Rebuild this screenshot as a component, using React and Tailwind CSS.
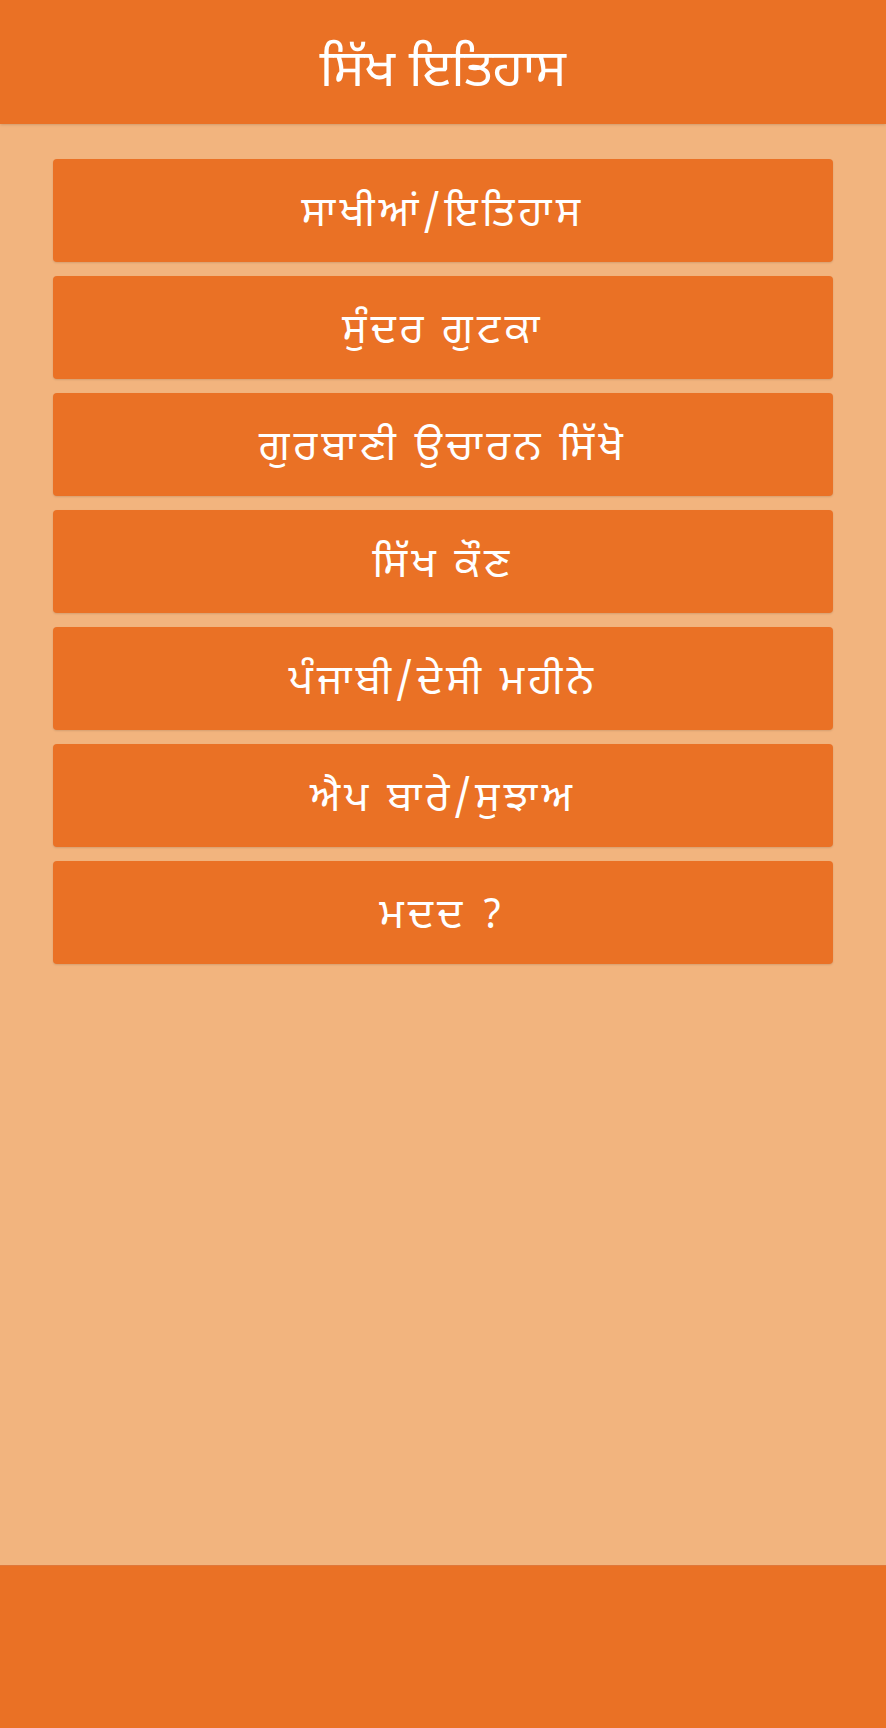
import React from "react";

const menuItems = [
  "ਸਾਖੀਆਂ/ਇਤਿਹਾਸ",
  "ਸੁੰਦਰ ਗੁਟਕਾ",
  "ਗੁਰਬਾਣੀ ਉਚਾਰਨ ਸਿੱਖੋ",
  "ਸਿੱਖ ਕੌਣ",
  "ਪੰਜਾਬੀ/ਦੇਸੀ ਮਹੀਨੇ",
  "ਐਪ ਬਾਰੇ/ਸੁਝਾਅ",
  "ਮਦਦ ?",
];

const App = () => {
  return (
    <div
      className="flex h-[1728px] w-full flex-col bg-[#f2b47e] text-white"
      style={{ fontFamily: '"Noto Sans Gurmukhi", "Noto Sans", "Liberation Sans", sans-serif' }}
    >
      {/* Header */}
      <div className="flex h-[124px] items-center justify-center bg-[#ea7125] pt-[22px] shadow-sm">
        <h1 className="text-[52px] leading-none">ਸਿੱਖ ਇਤਿਹਾਸ</h1>
      </div>

      {/* Menu */}
      <div className="flex flex-1 flex-col gap-[14px] px-[53px] pt-[35px]">
        {menuItems.map((item) => (
          <button
            key={item}
            className="flex h-[103px] w-full items-center justify-center rounded-[4px] bg-[#ea7125] pt-[12px] text-[41px] leading-none tracking-[4px] shadow-[0_1px_2px_rgba(0,0,0,0.12)]"
          >
            {item}
          </button>
        ))}
      </div>

      {/* Footer */}
      <div className="h-[163px] border-t border-[#e0773a] bg-[#ea7125]" />
    </div>
  );
};

export default App;
